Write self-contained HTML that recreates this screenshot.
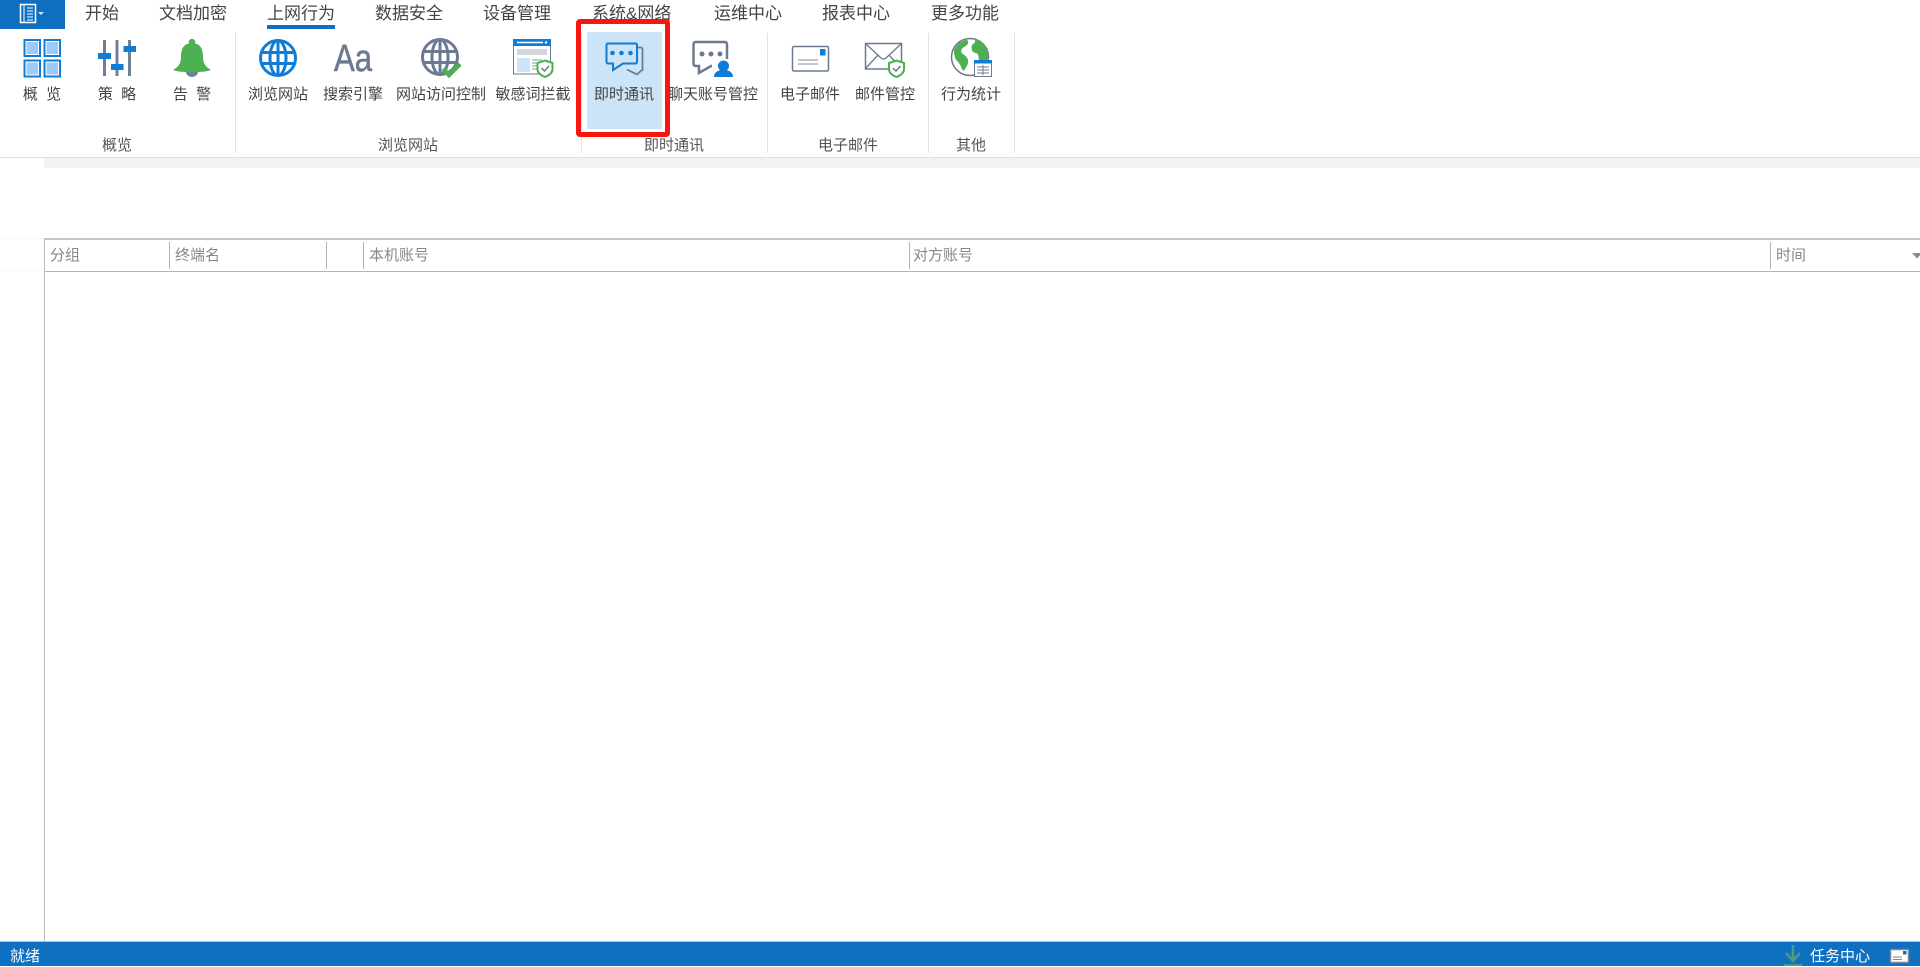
<!DOCTYPE html>
<html lang="zh"><head><meta charset="utf-8"><title>上网行为</title>
<style>
html,body{margin:0;padding:0;background:#fff;}
body{position:relative;width:1920px;height:966px;overflow:hidden;font-family:"Liberation Sans","Noto Sans CJK SC",sans-serif;color:#444;}
.a{position:absolute;white-space:nowrap;}
.t{font-size:17px;line-height:24px;top:2px;color:#444;}
.l{font-size:15px;line-height:20px;top:85px;transform:translateX(-50%);color:#444;word-spacing:4px;}
.g{font-size:15px;line-height:20px;top:136px;transform:translateX(-50%);color:#555;}
.h{font-size:15px;line-height:20px;top:246px;color:#888;}
.s{font-size:15px;line-height:20px;top:947px;color:#fff;}
.b{position:absolute;}
svg{position:absolute;left:0;top:0;}
</style></head><body>
<div class="b" style="left:0;top:0;width:65px;height:29px;background:#0f6fc0"></div>
<div class="b" style="left:267px;top:25px;width:68px;height:4px;background:#0f6fc0"></div>
<div class="a t" style="left:85px">开始</div>
<div class="a t" style="left:159px">文档加密</div>
<div class="a t" style="left:267px">上网行为</div>
<div class="a t" style="left:375px">数据安全</div>
<div class="a t" style="left:483px">设备管理</div>
<div class="a t" style="left:592px">系统&amp;网络</div>
<div class="a t" style="left:714px">运维中心</div>
<div class="a t" style="left:822px">报表中心</div>
<div class="a t" style="left:931px">更多功能</div>

<div class="b" style="left:587px;top:32px;width:75px;height:97px;background:#cce4f7"></div>
<div class="b" style="left:235px;top:33px;width:1px;height:120px;background:#e2e2e2"></div>
<div class="b" style="left:581px;top:33px;width:1px;height:120px;background:#e2e2e2"></div>
<div class="b" style="left:767px;top:33px;width:1px;height:120px;background:#e2e2e2"></div>
<div class="b" style="left:928px;top:33px;width:1px;height:120px;background:#e2e2e2"></div>
<div class="b" style="left:1014px;top:33px;width:1px;height:120px;background:#e2e2e2"></div>
<div class="b" style="left:0;top:157px;width:1920px;height:1px;background:#dedede"></div>
<div class="b" style="left:44px;top:158px;width:1876px;height:10px;background:#f3f3f3"></div>

<div class="a l" style="left:42px">概 览</div>
<div class="a l" style="left:117px">策 略</div>
<div class="a l" style="left:192px">告 警</div>
<div class="a l" style="left:278px">浏览网站</div>
<div class="a l" style="left:353px">搜索引擎</div>
<div class="a l" style="left:441px">网站访问控制</div>
<div class="a l" style="left:533px">敏感词拦截</div>
<div class="a l" style="left:624px">即时通讯</div>
<div class="a l" style="left:713px">聊天账号管控</div>
<div class="a l" style="left:810px">电子邮件</div>
<div class="a l" style="left:885px">邮件管控</div>
<div class="a l" style="left:971px">行为统计</div>

<div class="a g" style="left:117px">概览</div>
<div class="a g" style="left:408px">浏览网站</div>
<div class="a g" style="left:674px">即时通讯</div>
<div class="a g" style="left:848px">电子邮件</div>
<div class="a g" style="left:971px">其他</div>

<div class="b" style="left:576px;top:19px;width:84px;height:108px;border:5px solid #f7170f;border-radius:4px"></div>

<!-- table -->
<div class="b" style="left:0;top:238px;width:44px;height:1px;background:#f8f8f8"></div>
<div class="b" style="left:0;top:270px;width:44px;height:1px;background:#f8f8f8"></div>
<div class="b" style="left:44px;top:238px;width:1876px;height:2px;background:#c6c6c6"></div>
<div class="b" style="left:44px;top:271px;width:1876px;height:1px;background:#b4b4b4"></div>
<div class="b" style="left:44px;top:238px;width:1px;height:704px;background:#b8b8b8"></div>
<div class="b" style="left:169px;top:242px;width:1px;height:27px;background:#b4b4b4"></div>
<div class="b" style="left:326px;top:242px;width:1px;height:27px;background:#b4b4b4"></div>
<div class="b" style="left:363px;top:242px;width:1px;height:27px;background:#b4b4b4"></div>
<div class="b" style="left:909px;top:242px;width:1px;height:27px;background:#b4b4b4"></div>
<div class="b" style="left:1770px;top:242px;width:1px;height:27px;background:#b4b4b4"></div>
<div class="a h" style="left:50px">分组</div>
<div class="a h" style="left:175px">终端名</div>
<div class="a h" style="left:369px">本机账号</div>
<div class="a h" style="left:913px">对方账号</div>
<div class="a h" style="left:1776px">时间</div>

<!-- status -->
<div class="b" style="left:0;top:942px;width:1920px;height:24px;background:#0f6fc0"></div>
<div class="b" style="left:0;top:941px;width:1920px;height:1px;background:#b8c4ce"></div>
<div class="a s" style="left:10px">就绪</div>
<div class="a s" style="left:1810px">任务中心</div>

<svg width="1920" height="966" viewBox="0 0 1920 966" fill="none">
<!-- app menu -->
<rect x="20.500" y="4.500" width="15" height="18" fill="none" stroke="#fff" stroke-width="1.500"/>
<path d="M24 5v17M27 8h6M27 11h6M27 14h6M27 17h6M27 20h6" stroke="#fff"/>
<path d="M38 12h6l-3 3z" fill="#cfe3f5"/>
<!-- overview -->
<g>
<rect x="23.500" y="39" width="17.500" height="18" fill="#0f7cd6"/><rect x="43.500" y="39" width="17.500" height="18" fill="#0f7cd6"/>
<rect x="23.500" y="59.500" width="17.500" height="18" fill="#0f7cd6"/><rect x="43.500" y="59.500" width="17.500" height="18" fill="#0f7cd6"/>
<rect x="25.500" y="41" width="13.500" height="14" fill="#fff"/><rect x="45.500" y="41" width="13.500" height="14" fill="#fff"/>
<rect x="25.500" y="61.500" width="13.500" height="14" fill="#fff"/><rect x="45.500" y="61.500" width="13.500" height="14" fill="#fff"/>
<rect x="26.500" y="42" width="11.500" height="12" fill="#9ccbfb"/><rect x="46.500" y="42" width="11.500" height="12" fill="#9ccbfb"/>
<rect x="26.500" y="62.500" width="11.500" height="12" fill="#9ccbfb"/><rect x="46.500" y="62.500" width="11.500" height="12" fill="#9ccbfb"/>
</g>
<!-- sliders -->
<path d="M104.500 40v36M117 40v36M129.500 40v36" stroke="#6f7f95" stroke-width="3"/>
<rect x="98" y="53" width="13" height="6" fill="#0f7cd6"/><rect x="111" y="64" width="12.500" height="6" fill="#0f7cd6"/><rect x="123.500" y="46" width="12.500" height="6" fill="#0f7cd6"/>
<!-- bell -->
<path d="M186 72a6 5 0 0 0 12 0z" fill="#6f7f95"/>
<circle cx="192" cy="42" r="3.200" fill="#4caf50"/>
<path d="M192 43C183 43 181 50 181 57C181 64 178 67 173 70C180 73 204 73 211 70C206 67 203 64 203 57C203 50 201 43 192 43Z" fill="#4caf50"/>
<!-- globe blue -->
<g stroke="#0f7cd6" stroke-width="3">
<circle cx="278" cy="58" r="17.500"/><ellipse cx="278" cy="58" rx="8" ry="17.500"/>
<path d="M278 40v36M261 52.500h34M261 63.500h34"/>
</g>
<!-- Aa -->
<text x="334" y="71" font-family="Liberation Sans" font-size="38" fill="#6b7a90" stroke="#6b7a90" stroke-width=".6" textLength="38" lengthAdjust="spacingAndGlyphs">Aa</text>
<!-- globe gray -->
<g stroke="#6b7a90" stroke-width="3">
<circle cx="440" cy="57" r="17.500"/><ellipse cx="440" cy="57" rx="8" ry="17.500"/>
<path d="M440 39v36M423 51.500h34M423 62.500h34"/>
</g>
<path d="M443 69l6 6 11-11" stroke="#4caf50" stroke-width="4.500"/>
<!-- browser -->
<rect x="513.500" y="40" width="37" height="34" fill="#fff" stroke="#6b7a90"/>
<rect x="513" y="39" width="38" height="7" fill="#0f7cd6"/>
<path d="M517 42.500h26" stroke="#fff" stroke-width="1.500"/><circle cx="546" cy="42.500" r="1.200" fill="#fff"/>
<rect x="517" y="49" width="30" height="6" fill="#d2d5da"/>
<rect x="517" y="58" width="13" height="14" fill="#cce4fb"/>
<path d="M532 60h10M532 63h7M532 66h6M532 69h5" stroke="#8f9aaa"/>
<path d="M545 60.500l7.500 2.500v6c0 4-3.500 6.500-7.500 8c-4-1.500-7.500-4-7.500-8v-6z" fill="#fff" stroke="#4caf50" stroke-width="2"/>
<path d="M541.500 68l3 3 4.500-5" stroke="#6b7a90" stroke-width="1.500"/>
<!-- IM -->
<path d="M637 47.500h4a1.500 1.500 0 0 1 1.500 1.500V70l-.5 0-5 4.500L627 69.500" stroke="#6b7a90" stroke-width="1.700"/>
<path d="M608 43.500h27.500a1.500 1.500 0 0 1 1.500 1.500V62a1.500 1.500 0 0 1-1.500 1.500H623L613 70v-6.500h-5A1.500 1.500 0 0 1 606.500 62V45A1.500 1.500 0 0 1 608 43.500Z" fill="#cce4f7" stroke="#0f7cd6" stroke-width="2"/>
<circle cx="612.500" cy="53" r="2.300" fill="#0f7cd6"/><circle cx="621.500" cy="53" r="2.300" fill="#0f7cd6"/><circle cx="630.500" cy="53" r="2.300" fill="#0f7cd6"/>
<!-- chat account -->
<path d="M712 66h-1l-12 7v-7h-3.500a2 2 0 0 1-2-2V44a2 2 0 0 1 2-2h29.500a2 2 0 0 1 2 2V59" stroke="#6b7a90" stroke-width="2.500"/>
<circle cx="702" cy="54" r="2.500" fill="#6b7a90"/><circle cx="711" cy="54" r="2.500" fill="#6b7a90"/><circle cx="720" cy="54" r="2.500" fill="#6b7a90"/>
<circle cx="723.500" cy="66" r="5.500" fill="#0f7cd6"/>
<path d="M714 77c0-4 3-7 9.500-7s9.500 3 9.500 7z" fill="#0f7cd6"/>
<!-- envelope -->
<rect x="792.500" y="46.500" width="36" height="24.500" rx="1.500" fill="#fff" stroke="#6b7a90" stroke-width="1.500"/>
<rect x="820" y="49" width="5.500" height="6.500" fill="#0f7cd6"/>
<path d="M798 60h20M798 64h20" stroke="#9aa5b4" stroke-width="1.300"/>
<!-- mail -->
<rect x="865.500" y="43.500" width="36" height="25.500" fill="#fff" stroke="#6b7a90" stroke-width="1.500"/>
<path d="M866 44l15 14c1.500 1.400 3.500 1.400 5 0l15-14M866 68l12-13M901 68l-12-13" stroke="#6b7a90" stroke-width="1.300"/>
<path d="M896.500 60.500l7.500 2.500v6c0 4-3.500 6.500-7.500 8c-4-1.500-7.500-4-7.500-8v-6z" fill="#fff" stroke="#4caf50" stroke-width="2"/>
<path d="M893 68l3 3 4.500-5" stroke="#6b7a90" stroke-width="1.500"/>
<!-- earth -->
<circle cx="970" cy="57" r="18.500" fill="#fff" stroke="#6b7a90" stroke-width="1.500"/>
<path d="M954 50c3-6 8-10 13-10 3 2 0 6-3 7-3 2-4 5-1 7 3 2 6 5 5 9-1 3-3 7-5 8-2-4-3-8-6-10-2-2-3-6-3-11z" fill="#4caf50"/>
<path d="M974 39c7 1 12 6 14 14 0 3 0 5-1 7h-8l-1-6-5-2c-2-3-2-6 0-8 2-1 3-3 1-5z" fill="#4caf50"/>
<rect x="974.500" y="60.500" width="17" height="16" fill="#fff" stroke="#6b7a90"/>
<rect x="974" y="60" width="18" height="3.500" fill="#0f7cd6"/>
<path d="M977 67h12M977 70h12M977 73h12M983 65v10" stroke="#6b7a90"/>
<!-- header sort -->
<path d="M1912 253h10l-5 5.500z" fill="#8a8a8a"/>
<!-- status icons -->
<path d="M1793 945v17M1786 953l7 8 7-8" stroke="#4a9d7c" stroke-width="2.500"/>
<path d="M1784 964h18v2h-18z" fill="#4a9d7c"/>
<rect x="1890.500" y="949.500" width="18" height="13" fill="#fff" stroke="#7b8794" stroke-width="1.500"/>
<rect x="1903" y="951" width="3.500" height="3.500" fill="#0f6fc0"/>
<path d="M1893 957h9M1893 959.500h9" stroke="#7b8794"/>
</svg>
</body></html>
